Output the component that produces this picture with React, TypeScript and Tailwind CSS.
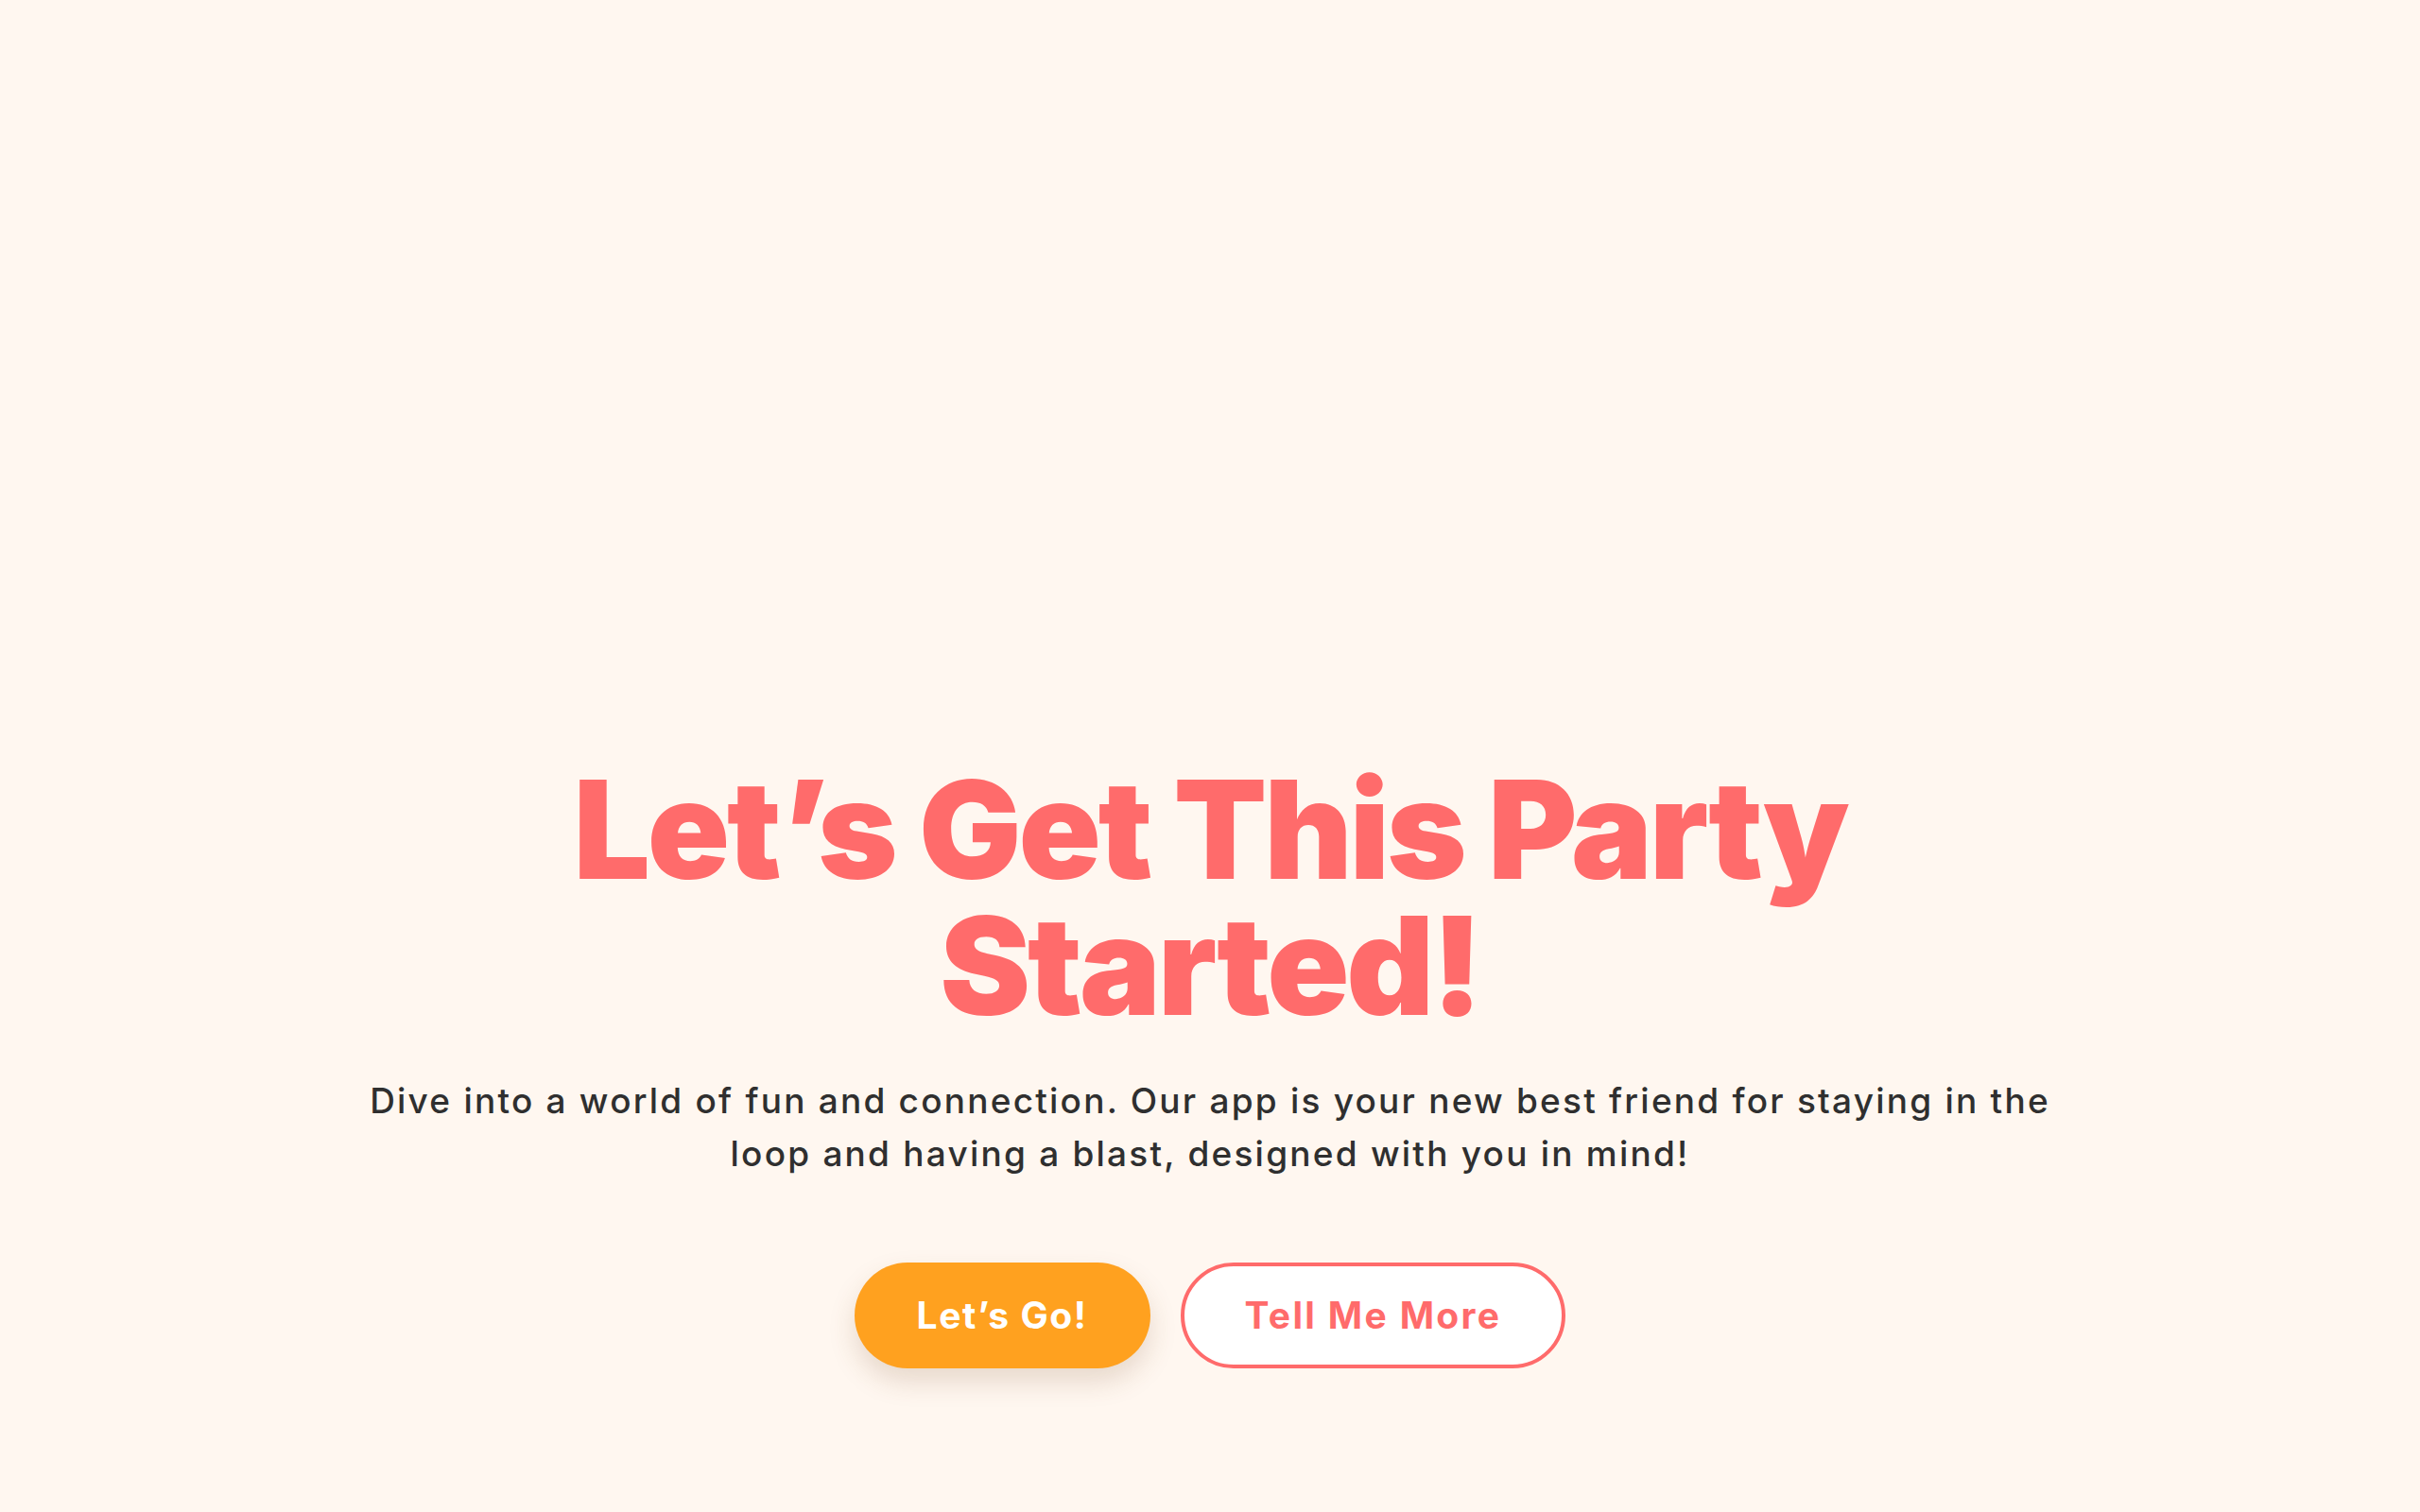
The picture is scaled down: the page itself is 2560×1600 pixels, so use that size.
function Heading() {
  return (
    <h1 className="font-['Inter',sans-serif] font-black text-[144px] leading-none tracking-[-0.022em] text-[#ff6b6b] text-center max-w-[1400px]">
      Let’s Get This Party Started!
    </h1>
  );
}

function Lead() {
  return (
    <p className="mt-[43px] max-w-[1820px] text-center font-['Inter',sans-serif] font-medium text-[37px] leading-[56px] tracking-[0.06em] text-[#2f2f2f]">
      Dive into a world of fun and connection. Our app is your new best friend for staying in the loop and having a blast, designed with you in mind!
    </p>
  );
}

function Actions() {
  return (
    <div className="mt-[87px] flex items-center gap-8">
      <button className="h-[112px] px-[66px] rounded-full bg-[#ffa11f] text-white font-['Inter',sans-serif] font-bold text-[39px] tracking-[0.04em] shadow-[0_14px_28px_rgba(120,80,40,0.18)]">
        Let’s Go!
      </button>
      <button className="h-[112px] px-[64px] rounded-full bg-white border-4 border-[#ff6b6b] text-[#ff6b6b] font-['Inter',sans-serif] font-bold text-[39px] tracking-[0.06em]">
        Tell Me More
      </button>
    </div>
  );
}

export default function App() {
  return (
    <main className="min-h-screen w-full bg-[#fff7f0] flex flex-col items-center justify-end pb-[152px]">
      <Heading />
      <Lead />
      <Actions />
    </main>
  );
}
